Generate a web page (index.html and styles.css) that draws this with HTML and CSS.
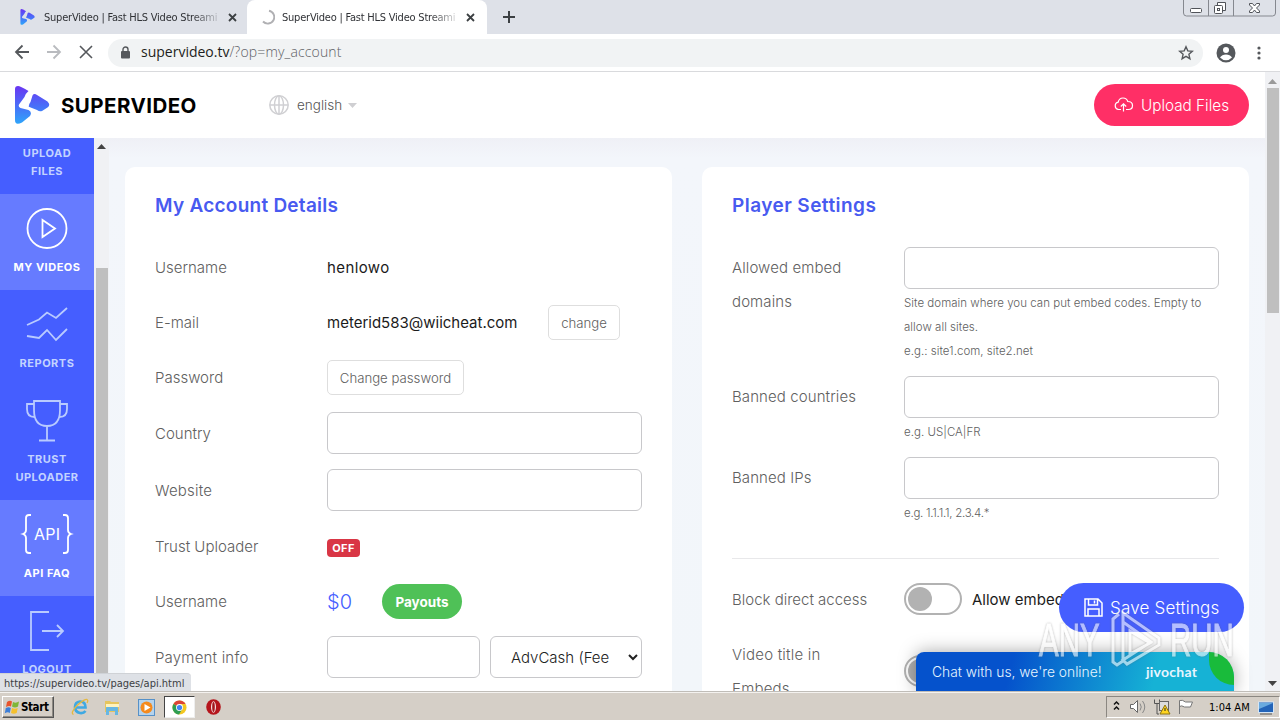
FILE: index.html
```html
<!DOCTYPE html>
<html lang="en">
<head>
<meta charset="utf-8">
<title>SuperVideo | Fast HLS Video Streaming</title>
<link rel="stylesheet" href="styles.css">
</head>
<body>
<svg width="0" height="0" class="defs">
  <defs>
    <linearGradient id="lg" x1="0" y1="0" x2="0" y2="38" gradientUnits="userSpaceOnUse"><stop offset="0" stop-color="#6a35f2"/><stop offset="0.5" stop-color="#4a6cf8"/><stop offset="1" stop-color="#2ea6fa"/></linearGradient>
    <symbol id="logo" viewBox="0 0 36 38">
      <path fill="url(#lg)" d="M1 3Q1 0 4 0Q6 0 14.500 5Q12 7 10.500 11L5 18.500Q4 21 6.500 22L14.500 24Q18.500 26 16 30L8 36.500Q1 40 1 34Z"/>
      <path fill="url(#lg)" d="M18.500 9.500Q20 7 23 9L33.500 15.500Q37 19 33.500 21.500L28 25Q25.500 26 23 24L14.800 20.800Q14.500 18.500 16.500 16Z"/>
    </symbol>
  </defs>
</svg>
<div class="screen">
  <div class="tabs">
    <div class="tab tab-back">
      <svg width="15" height="16"><use href="#logo"/></svg>
      <span class="tab-title">SuperVideo | Fast HLS Video Streami</span>
      <svg class="x" width="9" height="9" viewBox="0 0 9 9"><path d="M1 1l7 7M8 1l-7 7"/></svg>
    </div>
    <div class="tab tab-active">
      <svg class="spin" width="15" height="16" viewBox="0 0 15 16"><path d="M9 1.700A6.500 6.500 0 1 1 3 12.500" fill="none" stroke="#b0b0b3" stroke-width="1.900"/></svg>
      <span class="tab-title">SuperVideo | Fast HLS Video Streami</span>
      <svg class="x" width="9" height="9" viewBox="0 0 9 9"><path d="M1 1l7 7M8 1l-7 7"/></svg>
    </div>
    <svg class="plus" width="12" height="12" viewBox="0 0 12 12"><path d="M6 0v12M0 6h12" stroke="#3c4043" stroke-width="2"/></svg>
    <svg class="winbtns" width="93" height="17" viewBox="0 0 93 17" fill="none" stroke="#85888f">
      <path d="M.5 0v13q0 3 3 3h86q3 0 3-3V0M25.500 0v16M50.500 0v16"/>
      <g stroke="#505359"><rect x="7.500" y="8.500" width="11" height="4" rx="1" fill="#fff"/><path d="M34.500 5V2.500h8v8h-2.500" fill="#fff"/><rect x="31.500" y="5.500" width="8" height="8" rx="1" fill="#fff"/><rect x="34.500" y="8.500" width="2" height="2"/><path fill="#fff" d="M66.500 3.500h3l2 2.500 2-2.500h3v1.500l-3 3 3 3v1.500h-3l-2-2.500-2 2.500h-3V11l3-3-3-3z"/></g>
    </svg>
  </div>
  <div class="toolbar">
    <svg width="108" height="37" viewBox="0 0 108 37" fill="none" stroke="#55585c" stroke-width="1.800"><path d="M29 18H16M22.500 11.500 16 18l6.500 6.500"/><path stroke="#b9bbbf" d="M47 18h13M53.500 11.500 60 18l-6.500 6.500"/><path stroke-width="1.600" d="M80 12l12 12M92 12 80 24"/></svg>
    <div class="omni">
      <svg width="9" height="13" viewBox="0 0 9 13"><rect y="5" width="9" height="7.500" rx="1" fill="#55585c"/><path d="M2 5.500V3.500a2.500 2.500 0 0 1 5 0v2" fill="none" stroke="#55585c" stroke-width="1.400"/></svg>
      <span class="url"><b>supervideo.tv</b>/?op=my_account</span>
      <svg class="star" width="16" height="16" viewBox="0 0 16 16"><path d="M8 1.800l1.800 4.100 4.500.4-3.400 3 1 4.400L8 11.400l-3.900 2.300 1-4.400-3.400-3 4.500-.4z" fill="none" stroke="#55585c" stroke-width="1.400"/></svg>
    </div>
    <svg class="user" width="20" height="20" viewBox="0 0 20 20"><circle cx="10" cy="10" r="9.500" fill="#55585c"/><circle cx="10" cy="7" r="3" fill="#fff"/><path d="M4 14.500Q6 11.500 10 11.500t6 3Q13.500 17.200 10 17.200T4 14.500z" fill="#fff"/></svg>
    <svg class="dots" width="4" height="14" viewBox="0 0 4 14" fill="#55585c"><circle cx="2" cy="2" r="1.600"/><circle cx="2" cy="7" r="1.600"/><circle cx="2" cy="12" r="1.600"/></svg>
  </div>

  <div class="view">
    <div class="page">
      <header class="head">
        <svg width="36" height="38"><use href="#logo"/></svg>
        <span class="brand">SUPERVIDEO</span>
        <svg class="globe" width="20" height="20" viewBox="0 0 20 20" fill="none" stroke="#d0d0d3" stroke-width="1.500"><circle cx="10" cy="10" r="9.200"/><ellipse cx="10" cy="10" rx="4.500" ry="9.200"/><path d="M10 1v18M1 10h18"/></svg>
        <span class="lang">english</span>
        <svg width="9" height="5" viewBox="0 0 9 5"><path d="M0 0h9L4.500 5z" fill="#cfcfd2"/></svg>
        <button class="upload"><svg width="20" height="16" viewBox="0 0 20 16" fill="none" stroke="#fff" stroke-width="1.200"><path d="M7 12.500H4.500a3.700 3.700 0 0 1-.3-7.300Q5 1 9 1q3.700 0 4.800 3.500 4.700 0 4.700 4 0 4-4 4H12M9.500 14.500V7M6.800 9.500 9.500 6.800l2.700 2.700"/></svg><span>Upload Files</span></button>
      </header>
      <div class="body">
        <nav class="side">
          <a class="i1">UPLOAD<br>FILES</a>
          <a class="lit"><svg width="42" height="42" viewBox="0 0 42 42"><circle cx="21" cy="20.500" r="19.500"/><path d="M16.500 12v17L29 20.500z"/></svg><span>MY VIDEOS</span></a>
          <a><svg width="42" height="42" viewBox="0 0 42 42"><path d="M1 21 13 15.500 21 8.500 30 14 41 4M1 32l12 2 8-8 9 10 11-11"/></svg><span>REPORTS</span></a>
          <a class="tall"><svg width="42" height="42" viewBox="0 0 42 42"><path d="M8 1h26v9q0 16-13 16T8 10zM8 4H1v5q0 8 7.500 8M34 4h7v5q0 8-7.500 8M21 26v14M13 40.500h16"/></svg><span>TRUST<br>UPLOADER</span></a>
          <a class="lit"><svg width="52" height="42" viewBox="0 0 52 42"><path d="M10 1H8Q5 1 5 4v12q0 3-3 4 3 1 3 4v12q0 3 3 3h2M42 1h2q3 0 3 3v12q0 3 3 4-3 1-3 4v12q0 3-3 3h-2"/><text x="13" y="25.500" textLength="26" class="api">API</text></svg><span>API FAQ</span></a>
          <a><svg width="42" height="42" viewBox="0 0 42 42"><path d="M23 2H5v38h18M16 21h21M31 15l6 6-6 6"/></svg><span>LOGOUT</span></a>
        </nav>
        <div class="sbar"><svg width="9" height="5" viewBox="0 0 9 5"><path d="M0 5h9L4.500 0z" fill="#444"/></svg><div class="thumb"></div></div>
        <main class="main">
          <section class="card left">
            <h2>My Account Details</h2>
            <div class="row"><label>Username</label><span class="val v1">henlowo</span></div>
            <div class="row"><label>E-mail</label><span class="val v2">meterid583@wiicheat.com</span><button class="btn b1">change</button></div>
            <div class="row"><label>Password</label><button class="btn b2">Change password</button></div>
            <div class="row h56"><label class="drop">Country</label><div class="field"></div></div>
            <div class="row h58"><label class="drop wide">Website</label><div class="field"></div></div>
            <div class="row h56"><label>Trust Uploader</label><span class="off">OFF</span></div>
            <div class="row h53"><label>Username</label><span class="money">$0</span><button class="pay">Payouts</button></div>
            <div class="row h58"><label class="drop wide">Payment info</label><div class="field half"></div><div class="field half sel"><span>AdvCash (Fee</span><svg width="10" height="7" viewBox="0 0 10 7"><path d="M1 1l4 4 4-4" fill="none" stroke="#222" stroke-width="2"/></svg></div></div>
          </section>
          <section class="card right">
            <h2>Player Settings</h2>
            <div class="prow p1"><label>Allowed embed<br>domains</label><div class="col"><div class="field"></div><small><span>Site domain where you can put embed codes. Empty to</span><br><span>allow all sites.</span><br><span>e.g.: site1.com, site2.net</span></small></div></div>
            <div class="prow p2"><label>Banned countries</label><div class="col"><div class="field"></div><small>e.g. US|CA|FR</small></div></div>
            <div class="prow p3"><label>Banned IPs</label><div class="col"><div class="field"></div><small class="ips">e.g. 1.1.1.1, 2.3.4.*</small></div></div>
            <div class="prow p4"><label>Block direct access</label><div class="toggle"></div><span class="val tv">Allow embed only</span></div>
            <div class="prow p5"><label>Video title in<br>Embeds</label><div class="toggle"></div></div>
          </section>
        </main>
      </div>
    </div>
    <div class="sbar outer"><svg width="9" height="5" viewBox="0 0 9 5"><path d="M0 5h9L4.500 0z" fill="#9a9a9a"/></svg><div class="thumb"></div><svg class="down" width="9" height="5" viewBox="0 0 9 5"><path d="M0 0h9L4.500 5z" fill="#444"/></svg></div>
    <button class="save"><svg width="19" height="19" viewBox="0 0 19 19" fill="none" stroke="#fff" stroke-width="1.500"><path d="M1 1h13l4 4v13H1zM4.500 1v6h9V1M10.500 2.500v3M4 18v-7h11v7"/></svg><span>Save Settings</span></button>
    <div class="chat"><span class="msg">Chat with us, we're online!</span><span class="jivo">jivochat</span><i class="leaf"></i></div>
    <div class="mark"><span>ANY</span><svg width="52" height="60" viewBox="0 0 52 60" fill="none" stroke="#fff" stroke-width="3"><path d="M9 4 3 9v43l4 3 6-4V10M13 3l36 25v7L17 54l-4-4 28-18L13 12zM20 21l20 12-20 11z"/></svg><span>RUN</span></div>
    <div class="status">https://supervideo.tv/pages/api.html</div>
  </div>

  <footer class="task">
    <div class="start"><svg width="16" height="15" viewBox="0 0 16 15"><path fill="#e8542c" d="M3 2q3-2 5-.5L7 6.500q-2-1-5 .5z"/><path fill="#7fb636" d="M9 2q3 1.500 6-.5L14 6.500q-3 2-6 0z"/><path fill="#3c7ed8" d="M1.800 8q3-1.500 5 0l-1 5q-2-1.500-5 .2z"/><path fill="#f5c02c" d="M8 8q3 1.500 5.700 0l-1 5q-3 1.500-5.700 0z"/></svg>Start</div>
    <svg class="ie" width="18" height="18" viewBox="0 0 18 18" fill="none"><path d="M14.500 13Q12.500 15.500 9 15q-5-1-5-6t5-5.500q5.500 0 5.500 6H5" stroke="#3fa9e2" stroke-width="2.700"/><path d="M2.500 16.500Q-1 15 6 7.500 15-.5 16.500 2q.7 1-.5 3" stroke="#e5b93f" stroke-width="1.300"/></svg>
    <svg class="fold" width="17" height="17" viewBox="0 0 17 17"><path d="M1 2h5l1 1h8v10H1z" fill="#e6c55e"/><path d="M2 5h13v3H2z" fill="#fff3bd"/><path d="M2 16V9q0-1 1-1h10q1 0 1 1v7h-3v-4H5v4z" fill="#67b7e3"/></svg>
    <svg class="wmp" width="17" height="17" viewBox="0 0 17 17"><rect x=".5" y=".5" width="16" height="16" fill="#b5d3ec" stroke="#5691c8"/><circle cx="8.500" cy="8.500" r="6" fill="#f58a1c"/><path d="M6.500 5v7l6-3.500z" fill="#fff"/></svg>
    <div class="chrome"><svg width="15" height="15" viewBox="0 0 16 16"><circle cx="8" cy="8" r="7.500" fill="#f3c722"/><path d="M8 8 1.500 4.200A7.500 7.500 0 0 1 14.500 4.300H8z" fill="#dc4437"/><path d="M8 8 1.500 4.200A7.500 7.500 0 0 0 7.500 15.500L11 9.500z" fill="#2f9e53"/><circle cx="8" cy="8" r="3.700" fill="#fff"/><circle cx="8" cy="8" r="2.800" fill="#4285f4"/></svg></div>
    <svg class="opera" width="15" height="16" viewBox="0 0 15 16"><ellipse cx="7.500" cy="8" rx="7.300" ry="7.800" fill="#b5151c"/><ellipse cx="7.500" cy="8" rx="2.500" ry="5.800" fill="#f5e2e2"/><ellipse cx="7.500" cy="8" rx="1.300" ry="5" fill="#a3161c"/></svg>
    <div class="tray">
      <svg width="86" height="20" viewBox="0 0 86 20" fill="none" stroke="#111"><path d="M7 7.500 9.500 5 12 7.500M7 12.500 9.500 10 12 12.500" stroke-width="1.500"/><path d="M23.500 7.500h3l4-4v12l-4-4h-3z" fill="#fff" stroke="#666"/><path d="M33 6.500q2.500 3.500 0 7M35.500 4q4.500 6 0 12" stroke="#888"/><path d="M47.500 2.500v4h5v-4M50 6v11h2" stroke="#555"/><rect x="52.500" y="4.500" width="9" height="9" fill="#ddd" stroke="#666"/><path d="M58 8l5 9H53z" fill="#ffd51f" stroke="#8f7412"/><path d="M58 11v3" stroke="#222"/><path d="M72.500 17V3.500q3-1 6 1.500h7l-2 5h-6q-3-2-5-.5" fill="#fff" stroke="#777"/></svg>
      <span class="time">1:04 AM</span>
      <svg width="16" height="15" viewBox="0 0 16 15"><rect x=".5" y="2" width="15" height="10.500" fill="#2364b8" stroke="#d5e5f4"/><path d="M1 3h14L1 9z" fill="#69aadf"/><path d="M2 14h12" stroke="#555"/></svg>
    </div>
  </footer>
</div>
</body>
</html>
```
FILE: styles.css
```css
* { box-sizing: border-box; }
body { margin: 0; overflow: hidden; font-family: Inter, "Liberation Sans", sans-serif; font-weight: 300; }
button { font: inherit; border: 0; padding: 0; margin: 0; background: none; white-space: nowrap; }
svg { flex: none; display: block; }
.defs { position: absolute; }
.screen { width: 1280px; height: 720px; display: flex; flex-direction: column; overflow: hidden; background: #fff; }

.tabs { height: 34px; flex: none; display: flex; align-items: center; background: #dee1e8; }
.tab { height: 34px; display: flex; align-items: center; }
.tab-back { width: 247px; padding-left: 20px; }
.tab-active { width: 240px; padding-left: 13px; background: #fff; border-radius: 8px 8px 0 0; }
.tab-title { font: 11px "DejaVu Sans Condensed", sans-serif; letter-spacing: -0.22px; color: #303236; width: 176px; margin-left: 9px; white-space: nowrap; -webkit-mask-image: linear-gradient(90deg, #000 84%, transparent 102%); }
.tab-active .tab-title { margin-left: 7px; }
.x { margin-left: 8px; fill: none; stroke: #3c4043; stroke-width: 1.8; }
.plus { margin-left: 16px; }
.winbtns { margin-left: auto; margin-right: 4px; align-self: flex-start; }

.toolbar { height: 38px; flex: none; display: flex; align-items: center; background: #fff; border-bottom: 1px solid #d9dadd; }
.omni { width: 1095px; height: 28px; border-radius: 14px; background: #f1f3f4; display: flex; align-items: center; padding-left: 13px; }
.url { font: 300 14px "Open Sans", "Noto Sans", sans-serif; color: #5d6064; margin-left: 11px; margin-top: -2px; letter-spacing: 0.15px; }
.url b { font-weight: 400; color: #1d1e20; letter-spacing: 0; }
.star { margin-left: auto; margin-right: 9px; }
.user { margin-left: 13px; }
.dots { margin-left: 21px; }

.view { height: 619px; flex: none; display: flex; position: relative; }
.page { width: 1265px; display: flex; flex-direction: column; }
.head { height: 66px; flex: none; display: flex; align-items: center; padding: 0 16px 0 14px; background: #fff; }
.brand { width: 136px; margin-left: 11px; font-size: 20.5px; font-weight: 700; letter-spacing: 0.45px; color: #000; white-space: nowrap; }
.globe { margin-left: 72px; }
.lang { width: 45px; margin: 0 6px 0 8px; font-size: 13.5px; color: #555; }
.upload { margin-left: auto; width: 155px; height: 42px; border-radius: 21px; background: #ff2f66; color: #fff; font-size: 15.3px; display: flex; align-items: center; justify-content: center; gap: 7px; }

.body { height: 554px; display: flex; overflow: hidden; }
.side { width: 94px; height: 554px; overflow: hidden; background: #455eff; }
.side a { height: 96px; display: flex; flex-direction: column; align-items: center; padding-top: 14px; text-align: center; font-size: 11px; font-weight: 700; line-height: 18px; letter-spacing: 0.5px; color: #c3d3ff; }
.side .i1 { height: 56px; padding-top: 6px; display: block; }
.side .tall { height: 114px; }
.side .lit { background: #667bff; color: #fff; }
.side a > svg { margin-bottom: 8px; fill: none; stroke: #b9cbff; stroke-width: 1.8; overflow: visible; }
.side .lit > svg { stroke: #fff; }
.side .lit .api { font-size: 16px; font-weight: 400; letter-spacing: 0; fill: #fff; stroke: none; }
.sbar { width: 15px; flex: none; background: #f0f1f4; display: flex; flex-direction: column; align-items: center; padding-top: 6px; }
.sbar .thumb { width: 12px; height: 430px; margin-top: 119px; flex: none; background: #bfbfbf; }
.outer { height: 619px; padding-top: 7px; }
.outer .thumb { height: 225px; margin-top: 4px; }
.down { margin-top: auto; margin-bottom: 5px; }

.main { width: 1156px; display: grid; grid-template-columns: 547px 547px; gap: 30px; padding: 29px 16px 0; background: linear-gradient(180deg, #eff0f6 0, #f3f6fb 20px, #f2f6fa 100%); }
.card { height: 600px; background: #fff; border-radius: 10px; padding: 0 30px; overflow: hidden; }
h2 { margin: 0; height: 73px; padding-top: 26px; font-size: 19px; line-height: 26px; font-weight: 600; letter-spacing: 0.25px; color: #485af0; white-space: nowrap; }
.row { height: 55px; display: flex; align-items: center; }
.h56 { height: 56px; }
.h58 { height: 58px; }
.h53 { height: 53px; }
label { width: 172px; flex: none; font-size: 15px; line-height: 34px; color: #606060; white-space: nowrap; }
.drop { padding-top: 2px; }
.wide { letter-spacing: 0.2px; }
.val { font-size: 15px; color: #1b1b1b; white-space: nowrap; font-weight: 400; }
.v1 { letter-spacing: 0.4px; }
.v2 { width: 221px; }
.btn { height: 35px; border: 1px solid #dedede; border-radius: 5px; background: #fff; color: #606060; font-size: 13.2px; }
.b1 { width: 72px; }
.b2 { width: 137px; }
.field { width: 315px; height: 42px; border: 1px solid #c8c8cb; border-radius: 6px; background: #fff; }
.half { width: 153px; margin-right: 10px; flex: none; }
.sel { width: 152px; margin-right: 0; display: flex; align-items: center; justify-content: space-between; padding: 0 3px 0 20px; font-size: 15px; color: #222; white-space: nowrap; }
.off { width: 33px; height: 18px; margin-top: 2px; border-radius: 4px; background: #d93645; color: #fff; font-size: 11px; line-height: 18px; font-weight: 700; text-align: center; letter-spacing: 0.4px; }
.money { width: 55px; font-size: 20px; color: #455eff; }
.pay { width: 80px; height: 35px; border-radius: 18px; background: #4fc157; color: #fff; font-size: 13.5px; font-weight: 700; }

.right h2 { height: 80px; letter-spacing: 0.45px; }
.prow { display: flex; align-items: flex-start; }
.prow label { padding-top: 4px; letter-spacing: 0.1px; }
.col { width: 315px; }
small { display: block; padding-top: 2px; font-size: 11.5px; line-height: 24px; letter-spacing: 0.03px; color: #606060; white-space: nowrap; }
.ips { letter-spacing: -0.25px; }
.p1 { height: 129px; }
.p2 { height: 81px; }
.p3 { height: 102px; border-bottom: 1px solid #e8e8ea; }
.p4 { height: 96px; padding-top: 24px; }
.p4 label { padding-top: 0; letter-spacing: 0; }
.p5 label { padding-top: 0; margin-top: -17px; letter-spacing: 0.2px; }
.toggle { width: 58px; height: 32px; border: 2px solid #b2b2b2; border-radius: 16px; padding: 2px; background: #fff; }
.toggle::before { content: ""; display: block; width: 24px; height: 24px; border-radius: 50%; background: #b2b2b2; }
.tv { margin-left: 10px; line-height: 34px; }

.save { position: absolute; left: 1059px; top: 511px; width: 185px; height: 49px; border-radius: 25px; background: #455eff; color: #fff; font-size: 17px; letter-spacing: 0.2px; display: flex; align-items: center; gap: 7px; padding-left: 25px; }
.chat { position: absolute; left: 916px; top: 580px; width: 318px; height: 39px; border-radius: 8px 26px 0 0; background: linear-gradient(105deg, #0552cc 30%, #16b2d5 75%); box-shadow: 0 0 18px rgba(0,0,0,.35); color: #e6f5ff; display: flex; align-items: center; padding-left: 16px; white-space: nowrap; clip-path: inset(-30px -30px 0 -30px); }
.msg { width: 214px; font-size: 13.8px; }
.jivo { font: 700 14px Lato, sans-serif; letter-spacing: 0.25px; }
.leaf { position: absolute; right: 0; top: 0; width: 25px; height: 33px; background: #19bb3b; border-radius: 0 25px 0 25px; }
.mark { position: absolute; left: 1039px; top: 538px; display: flex; align-items: center; gap: 8px; opacity: .6; filter: drop-shadow(0 0 1px rgba(90,90,90,.65)); color: #fff; }
.mark span { font: 400 46px/60px "Liberation Sans", sans-serif; width: 63px; transform-origin: 0 50%; transform: scaleX(.64); -webkit-text-stroke: 1px #fff; }
.status { position: absolute; left: 0; top: 601px; width: 191px; height: 19px; padding-left: 4px; background: #dee1e6; border-top: 1px solid #cfd2d6; border-radius: 0 4px 0 0; font: 11px/20px "DejaVu Sans Condensed", sans-serif; color: #3c4043; white-space: nowrap; }

.task { height: 29px; flex: none; position: relative; display: flex; align-items: center; background: #d5cfc7; border-top: 1px solid #c0bdb8; box-shadow: inset 0 1px #f4f2ef; padding: 2px 0 0 2px; }
.start { width: 52px; height: 22px; border: 1px solid; border-color: #fff #555 #555 #fff; box-shadow: inset -1px -1px #8e8a83; display: flex; align-items: center; gap: 1px; padding-left: 1px; font: bold 11.5px "DejaVu Sans Condensed", sans-serif; letter-spacing: -0.4px; color: #000; }
.ie { margin-left: 17px; }
.fold { margin-left: 15px; }
.wmp { margin-left: 17px; }
.chrome { width: 31px; height: 22px; margin-left: 9px; background: #fff; border: 1px solid; border-color: #444 #eee #eee #444; display: flex; align-items: center; justify-content: center; }
.opera { margin-left: 11px; }
.tray { margin-left: auto; width: 174px; height: 22px; border: 1px solid; border-color: #8b8781 #fff #fff #8b8781; display: flex; align-items: center; }
.time { width: 49px; margin-left: 16px; font: 11px "DejaVu Sans Condensed", sans-serif; color: #000; white-space: nowrap; }
```
